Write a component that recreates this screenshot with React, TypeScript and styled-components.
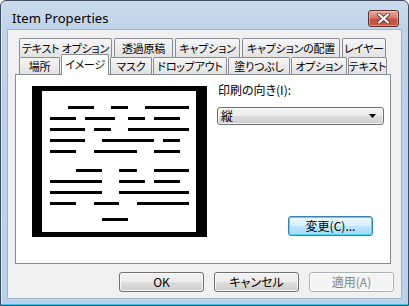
import styled, { createGlobalStyle } from "styled-components";

const GlobalStyle = createGlobalStyle`
  html, body {
    margin: 0;
    padding: 0;
    background: #ffffff;
  }
  * {
    box-sizing: border-box;
  }
`;

const uiFont = `"Noto Sans CJK JP", "Liberation Sans", sans-serif`;

const Window = styled.div`
  width: 409px;
  height: 306px;
  border: 1px solid #3f4c5c;
  border-radius: 6px 6px 0 0;
  background: linear-gradient(#cbdbed 0px, #bfd3ea 30px, #b9d1ea 100%);
  box-shadow: inset 0 -1px 0 #3fc4ec, inset 1px 0 0 #dbe7f4;
  display: flex;
  flex-direction: column;
  overflow: hidden;
`;

const TitleBar = styled.div`
  height: 28px;
  padding: 6px 9px 0 11px;
  display: flex;
  align-items: center;
`;

const Title = styled.span`
  font-family: "Noto Sans", "Open Sans", sans-serif;
  font-size: 13px;
  color: #000000;
  letter-spacing: 0.1px;
`;

const CloseButton = styled.div`
  margin-left: auto;
  width: 31px;
  height: 17px;
  border: 1px solid #5a2e2a;
  border-radius: 3px;
  background: linear-gradient(#e7aa9f 0%, #d47b6c 45%, #c5503e 55%, #c75a44 100%);
  box-shadow: inset 0 0 0 1px rgba(255, 220, 210, 0.45);
  display: flex;
  align-items: center;
  justify-content: center;
`;

const FrameBody = styled.div`
  flex: 1;
  padding: 0 6px 6px 6px;
  display: flex;
`;

const Client = styled.div`
  flex: 1;
  border: 1px solid #9fb4cc;
  background: #f0f0f0;
  display: flex;
  flex-direction: column;
  padding-top: 8px;
  font-family: ${uiFont};
  font-size: 12px;
  font-feature-settings: "palt";
  color: #000000;
`;

const TabControl = styled.div`
  margin-left: 7px;
  width: 376px;
  display: flex;
  flex-direction: column;
`;

const TabRow = styled.div<{ $h: number; $gap: number }>`
  display: flex;
  align-items: flex-end;
  height: ${(p) => p.$h}px;
  padding-left: 4px;
  gap: ${(p) => p.$gap}px;
`;

const Tab = styled.div<{ $w: number; $selected?: boolean }>`
  width: ${(p) => p.$w}px;
  height: ${(p) => (p.$selected ? "21px" : "100%")};
  margin-bottom: ${(p) => (p.$selected ? "-1px" : "0")};
  border: 1px solid #898c95;
  border-bottom: none;
  border-radius: 2px 2px 0 0;
  background: ${(p) =>
    p.$selected ? "#ffffff" : "linear-gradient(#f6f6f6, #ececec 50%, #e2e2e2)"};
  position: relative;
  z-index: ${(p) => (p.$selected ? 2 : 0)};
  display: flex;
  justify-content: center;
  align-items: ${(p) => (p.$selected ? "flex-start" : "center")};
  padding-top: ${(p) => (p.$selected ? "2px" : "0")};
  font-size: 11px;
  letter-spacing: -0.2px;
  line-height: 14px;
  white-space: nowrap;
`;

const Panel = styled.div`
  position: relative;
  z-index: 1;
  height: 190px;
  border: 1px solid #898c95;
  background: #ffffff;
  padding: 11px 0 0 16px;
  display: flex;
  align-items: flex-start;
`;

const Options = styled.div`
  margin-left: 10px;
  margin-top: -4px;
  width: 167px;
  display: flex;
  flex-direction: column;
`;

const Label = styled.div`
  line-height: 16px;
  padding-left: 1px;
`;

const Combo = styled.div`
  margin-top: 9px;
  height: 18px;
  border: 1px solid #707070;
  border-radius: 3px;
  background: linear-gradient(#f2f2f2, #ebebeb 50%, #dddddd 50%, #cfcfcf);
  box-shadow: inset 0 0 0 1px rgba(255, 255, 255, 0.7);
  display: flex;
  align-items: center;
  padding: 0 7px 0 3px;
  line-height: 14px;
`;

const ComboArrow = styled.svg`
  margin-left: auto;
`;

const ButtonRow = styled.div`
  margin-top: 8px;
  padding-right: 7px;
  display: flex;
  justify-content: flex-end;
  gap: 10px;
`;

const Button = styled.div<{ $variant?: "default" | "disabled" }>`
  width: 85px;
  height: 20px;
  border: 1px solid
    ${(p) =>
      p.$variant === "default" ? "#3c7fb1" : p.$variant === "disabled" ? "#adb2b5" : "#707070"};
  border-radius: 3px;
  background: ${(p) =>
    p.$variant === "default"
      ? "linear-gradient(#eaf6fd, #d9f0fc 50%, #bee6fd 50%, #a7d9f5)"
      : p.$variant === "disabled"
        ? "#f4f4f4"
        : "linear-gradient(#f2f2f2, #ebebeb 50%, #dddddd 50%, #cfcfcf)"};
  box-shadow: ${(p) =>
    p.$variant === "default"
      ? "inset 0 0 0 1px #48d8fb"
      : "inset 0 0 0 1px rgba(255, 255, 255, 0.75)"};
  color: ${(p) => (p.$variant === "disabled" ? "#838383" : "#000000")};
  display: flex;
  align-items: center;
  justify-content: center;
  line-height: 14px;
`;

const ChangeButton = styled(Button)`
  margin-top: 91px;
  margin-right: 11px;
  align-self: flex-end;
`;

const rowOne = [
  { label: "テキスト オプション", w: 93 },
  { label: "透過原稿", w: 59 },
  { label: "キャプション", w: 65 },
  { label: "キャプションの配置", w: 98 },
  { label: "レイヤー", w: 44 },
];

const rowTwo = [
  { label: "場所", w: 41 },
  { label: "イメージ", w: 48, selected: true },
  { label: "マスク", w: 42 },
  { label: "ドロップアウト", w: 74 },
  { label: "塗りつぶし", w: 62 },
  { label: "オプション", w: 56 },
  { label: "テキスト", w: 39 },
];

// text lines of the page thumbnail: [y, x1, x2]
const lines: [number, number, number][] = [
  [20, 36, 62], [20, 79, 96], [20, 113, 157],
  [31, 18, 44], [31, 53, 83], [31, 96, 113], [31, 122, 148],
  [42, 18, 53], [42, 62, 79], [42, 96, 157],
  [53, 18, 53], [53, 70, 122], [53, 131, 148],
  [64, 18, 44], [64, 62, 105], [64, 122, 148],
  [83, 44, 70], [83, 87, 105], [83, 122, 157],
  [94, 18, 70], [94, 87, 113], [94, 122, 148],
  [105, 18, 70], [105, 87, 157],
  [116, 18, 44], [116, 62, 87], [116, 105, 157],
  [132, 70, 96],
];

const PagePreview = () => (
  <svg width="175" height="151" viewBox="0 0 175 151">
    <rect x="0" y="0" width="175" height="151" fill="#000" />
    <rect x="10" y="5" width="154" height="141" fill="#fff" />
    {lines.map(([y, x1, x2], i) => (
      <rect key={i} x={x1} y={y} width={x2 - x1} height="3" fill="#000" />
    ))}
  </svg>
);

const CloseIcon = () => (
  <svg width="13" height="11" viewBox="0 0 13 11">
    <path d="M2 1.5 L11 9.5 M11 1.5 L2 9.5" stroke="#6a3a36" strokeWidth="4" strokeLinecap="round" />
    <path d="M2 1.5 L11 9.5 M11 1.5 L2 9.5" stroke="#ffffff" strokeWidth="2.2" strokeLinecap="round" />
  </svg>
);

export default function App() {
  return (
    <>
      <GlobalStyle />
      <Window>
        <TitleBar>
          <Title>Item Properties</Title>
          <CloseButton>
            <CloseIcon />
          </CloseButton>
        </TitleBar>
        <FrameBody>
          <Client>
            <TabControl>
              <TabRow $h={19} $gap={2}>
                {rowOne.map((t) => (
                  <Tab key={t.label} $w={t.w}>
                    {t.label}
                  </Tab>
                ))}
              </TabRow>
              <TabRow $h={17} $gap={1}>
                {rowTwo.map((t) => (
                  <Tab key={t.label} $w={t.w} $selected={t.selected}>
                    {t.label}
                  </Tab>
                ))}
              </TabRow>
              <Panel>
                <PagePreview />
                <Options>
                  <Label>印刷の向き(I):</Label>
                  <Combo>
                    <span>縦</span>
                    <ComboArrow width="7" height="4" viewBox="0 0 7 4">
                      <path d="M0 0 H7 L3.5 4 Z" fill="#000" />
                    </ComboArrow>
                  </Combo>
                  <ChangeButton $variant="default">変更(C)...</ChangeButton>
                </Options>
              </Panel>
            </TabControl>
            <ButtonRow>
              <Button>OK</Button>
              <Button>キャンセル</Button>
              <Button $variant="disabled">適用(A)</Button>
            </ButtonRow>
          </Client>
        </FrameBody>
      </Window>
    </>
  );
}
